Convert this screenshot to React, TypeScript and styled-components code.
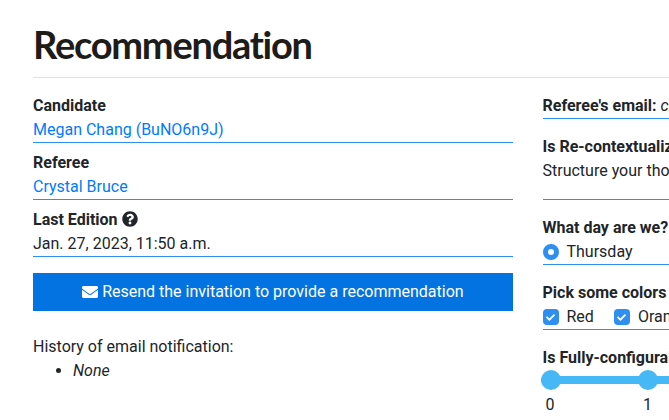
import React, { FC } from "react";
import styled, { createGlobalStyle } from "styled-components";
import { FaEnvelope, FaQuestionCircle, FaCheck } from "react-icons/fa";

const GlobalStyle = createGlobalStyle`
  html, body {
    margin: 0;
    padding: 0;
    background: #fff;
    overflow: hidden;
  }
  body {
    font-family: Roboto, "Liberation Sans", sans-serif;
    font-size: 16px;
    line-height: 24px;
    color: #212529;
  }
`;

const Page = styled.div`
  width: 669px;
  height: 420px;
  box-sizing: border-box;
  padding: 19px 0 0 33px;
  overflow: hidden;
`;

const Title = styled.h1`
  margin: 0;
  width: 636px;
  height: 58px;
  border-bottom: 1px solid #dee2e6;
  font-family: Lato, sans-serif;
  font-weight: 700;
  font-size: 38px;
  letter-spacing: -1.25px;
  line-height: 50px;
  color: #1e1b18;
`;

const Columns = styled.div`
  display: grid;
  grid-template-columns: 479.75px 480px;
  grid-gap: 29.75px;
  margin-top: 16px;
`;

const Column = styled.div`
  display: flex;
  flex-direction: column;
`;

const Field = styled.div<{ $gap?: number }>`
  border-bottom: 1px solid #2e8ff0;
  margin-bottom: ${(p) => p.$gap ?? 8}px;
  white-space: nowrap;
`;

const Label = styled.div`
  font-weight: 700;
`;

const InlineLabel = styled.span`
  font-weight: 700;
`;

const Value = styled.a`
  display: block;
  color: #007bff;
`;

const Help = styled.span`
  display: inline-flex;
  vertical-align: -2px;
  margin-left: 4px;
  font-size: 16px;
`;

const ResendButton = styled.button`
  display: flex;
  align-items: center;
  justify-content: center;
  gap: 4px;
  height: 38px;
  margin: 8px 0 24px;
  border: 0;
  background: #0373e2;
  color: #fff;
  font: inherit;
`;

const History = styled.div``;

const HistoryList = styled.ul`
  margin: 0;
  padding-left: 40px;
  font-style: italic;
`;

const TextBlock = styled.div`
  padding-bottom: 16px;
`;

const Options = styled.div`
  display: flex;
  gap: 20px;
`;

const Option = styled.label`
  display: flex;
  align-items: center;
  gap: 8px;
`;

const Radio = styled.span`
  width: 16px;
  height: 16px;
  box-sizing: border-box;
  border-radius: 50%;
  border: 5px solid #2e8ff0;
  background: #fff;
`;

const Check = styled.span`
  display: flex;
  align-items: center;
  justify-content: center;
  width: 16px;
  height: 16px;
  border-radius: 4px;
  background: #2e8ff0;
  color: #fff;
  font-size: 9px;
`;

const Slider = styled.div`
  position: relative;
  height: 8px;
  margin: 6px 0 0 -2px;
  border-radius: 4px;
  background: #45b8f5;
`;

const Knob = styled.span<{ $left: number }>`
  position: absolute;
  top: -6px;
  left: ${(p) => p.$left}px;
  width: 20px;
  height: 20px;
  border-radius: 50%;
  background: #45b8f5;
`;

const Ticks = styled.div`
  display: flex;
  margin-top: 9px;
  padding-left: 3px;
`;

const Tick = styled.span`
  width: 97.5px;
`;

const colors = ["Red", "Orange"];

const App: FC = () => (
  <>
    <GlobalStyle />
    <Page>
      <Title>Recommendation</Title>
      <Columns>
        <Column>
          <Field>
            <Label>Candidate</Label>
            <Value>Megan Chang (BuNO6n9J)</Value>
          </Field>
          <Field>
            <Label>Referee</Label>
            <Value>Crystal Bruce</Value>
          </Field>
          <Field>
            <Label>
              Last Edition
              <Help>
                <FaQuestionCircle />
              </Help>
            </Label>
            <div>Jan. 27, 2023, 11:50 a.m.</div>
          </Field>
          <ResendButton>
            <FaEnvelope />
            Resend the invitation to provide a recommendation
          </ResendButton>
          <History>
            History of email notification:
            <HistoryList>
              <li>None</li>
            </HistoryList>
          </History>
        </Column>
        <Column>
          <Field $gap={16}>
            <InlineLabel>Referee's email:</InlineLabel> <em>crystal.bruce@example.com</em>
          </Field>
          <Field $gap={16}>
            <Label>Is Re-contextualized?</Label>
            <TextBlock>Structure your thoughts</TextBlock>
          </Field>
          <Field $gap={16}>
            <Label>What day are we?</Label>
            <Options>
              <Option>
                <Radio />
                Thursday
              </Option>
            </Options>
          </Field>
          <Field $gap={16}>
            <Label>Pick some colors</Label>
            <Options>
              {colors.map((c) => (
                <Option key={c}>
                  <Check>
                    <FaCheck />
                  </Check>
                  {c}
                </Option>
              ))}
            </Options>
          </Field>
          <Label>Is Fully-configurable?</Label>
          <Slider>
            <Knob $left={0} />
            <Knob $left={97} />
          </Slider>
          <Ticks>
            <Tick>0</Tick>
            <Tick>1</Tick>
          </Ticks>
        </Column>
      </Columns>
    </Page>
  </>
);

export default App;
